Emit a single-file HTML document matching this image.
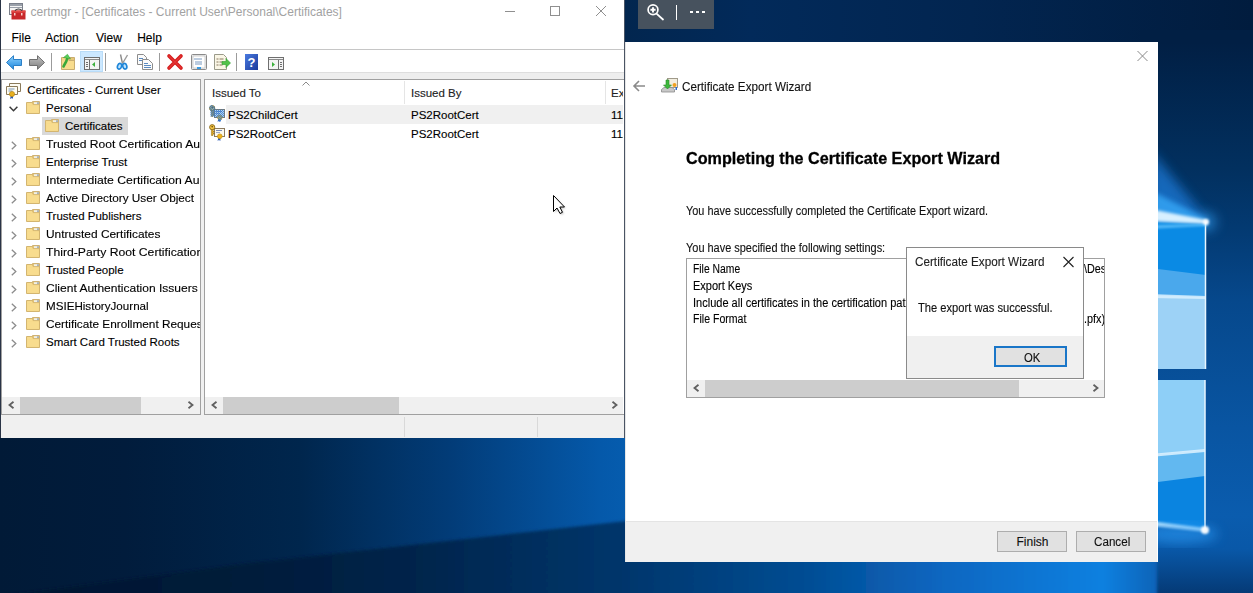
<!DOCTYPE html>
<html><head><meta charset="utf-8">
<style>
*{margin:0;padding:0;box-sizing:border-box}
html,body{width:1253px;height:593px;overflow:hidden}
body{position:relative;font-family:"Liberation Sans",sans-serif;font-size:12px;color:#000;background:#02204a}
.a{position:absolute}
.t{position:absolute;white-space:nowrap;line-height:12px;font-size:12px;-webkit-text-stroke:0.12px currentColor}
.s{font-size:11.5px;line-height:12px}
svg{position:absolute;overflow:visible}
.tr{position:absolute;left:0;height:18px;width:200px}
.btn{position:absolute;background:#e1e1e1;border:1px solid #adadad}
</style></head><body>
<svg class="a" style="left:0;top:0" width="1253" height="593" viewBox="0 0 1253 593">
<defs>
 <linearGradient id="gTop" gradientUnits="userSpaceOnUse" x1="625" y1="0" x2="1253" y2="0">
  <stop offset="0" stop-color="#02264f"/>
  <stop offset="0.2" stop-color="#022a5a"/>
  <stop offset="0.55" stop-color="#022550"/>
  <stop offset="1" stop-color="#011c3e"/>
 </linearGradient>
 <linearGradient id="gRight" gradientUnits="userSpaceOnUse" x1="0" y1="42" x2="0" y2="593">
  <stop offset="0" stop-color="#011f44"/>
  <stop offset="0.23" stop-color="#02305f"/>
  <stop offset="0.34" stop-color="#033a72"/>
  <stop offset="0.47" stop-color="#06488c"/>
  <stop offset="0.7" stop-color="#0955a2"/>
  <stop offset="0.86" stop-color="#0a5cae"/>
  <stop offset="0.92" stop-color="#0958a8"/>
  <stop offset="1" stop-color="#053a76"/>
 </linearGradient>
 <linearGradient id="gAbove" gradientUnits="userSpaceOnUse" x1="0" y1="0" x2="626" y2="0">
  <stop offset="0" stop-color="#011a37"/>
  <stop offset="0.2" stop-color="#011c3c"/>
  <stop offset="0.48" stop-color="#00264d"/>
  <stop offset="0.72" stop-color="#023c78"/>
  <stop offset="0.96" stop-color="#0559aa"/>
  <stop offset="1" stop-color="#065cae"/>
 </linearGradient>
 <linearGradient id="gBelow" gradientUnits="userSpaceOnUse" x1="0" y1="0" x2="1253" y2="0">
  <stop offset="0" stop-color="#011630"/>
  <stop offset="0.2" stop-color="#011b3a"/>
  <stop offset="0.32" stop-color="#012349"/>
  <stop offset="0.5" stop-color="#03366c"/>
  <stop offset="0.64" stop-color="#034c92"/>
  <stop offset="0.75" stop-color="#0a66c0"/>
  <stop offset="0.88" stop-color="#0a80e0"/>
  <stop offset="0.94" stop-color="#0858a8"/>
  <stop offset="1" stop-color="#043a76"/>
 </linearGradient>
 <filter id="b6" x="-20%" y="-20%" width="140%" height="140%"><feGaussianBlur stdDeviation="6"/></filter>
 <filter id="b3" x="-20%" y="-50%" width="140%" height="200%"><feGaussianBlur stdDeviation="2.5"/></filter>
 <filter id="b15" x="-50%" y="-50%" width="200%" height="200%"><feGaussianBlur stdDeviation="15"/></filter>
 <filter id="b6w" x="-150%" y="-150%" width="400%" height="400%"><feGaussianBlur stdDeviation="6"/></filter>
 <filter id="b1" x="-50%" y="-50%" width="200%" height="200%"><feGaussianBlur stdDeviation="1"/></filter>
 <filter id="b2" x="-50%" y="-50%" width="200%" height="200%"><feGaussianBlur stdDeviation="1.6"/></filter>
</defs>
<rect width="1253" height="593" fill="#011f40"/>
<rect x="600" y="0" width="653" height="60" fill="url(#gTop)"/>
<rect x="1140" y="30" width="113" height="563" fill="url(#gRight)"/>
<rect x="0" y="420" width="640" height="173" fill="url(#gAbove)"/>
<polygon points="-20,620 -20,599 250,563 626,521 1157,440 1157,620" fill="url(#gBelow)" filter="url(#b2)"/>
<rect x="0" y="520" width="640" height="73" fill="#053f7e" opacity="0.0"/>
<!-- faint beam light just above diagonal -->
<!-- logo glow above -->
<polygon points="1150,150 1207,219 1207,226 1150,228" fill="#1a7ad8" opacity="0.75" filter="url(#b6)"/>
<polygon points="1150,190 1207,219 1207,225 1150,224" fill="#3ab0ff" opacity="0.7" filter="url(#b3)"/>
<circle cx="1207" cy="222" r="10" fill="#3aa0f0" opacity="0.5" filter="url(#b6w)"/>
<!-- logo upper pane -->
<polygon points="1150,222 1206,224 1206,369 1150,369" fill="#0a8ae4"/>
<polygon points="1150,268 1206,275 1206,369 1150,369" fill="#4aa8ec"/>
<polygon points="1150,295 1206,297 1206,369 1150,369" fill="#9dd2f6"/>
<polygon points="1150,294 1206,296 1206,299 1150,298" fill="#dff2ff" opacity="0.8"/>
<line x1="1205.5" y1="222" x2="1205.5" y2="369" stroke="#e8f6ff" stroke-width="1.5"/>
<polygon points="1150,209 1207,220 1207,224 1150,221" fill="#d8f0ff" filter="url(#b2)"/>
<polygon points="1150,225 1207,224 1207,226 1150,229" fill="#6ac8ff" opacity="0.7" filter="url(#b1)"/>
<circle cx="1206" cy="222" r="3" fill="#ffffff" opacity="0.9" filter="url(#b1)"/>
<!-- lower pane -->
<polygon points="1150,380 1205,380 1205,530 1150,523" fill="#8ecff7"/>
<polygon points="1150,455 1205,450 1205,530 1150,523" fill="#62b8f0"/>
<polygon points="1150,483 1205,476 1205,530 1150,523" fill="#0a84e0"/>
<polygon points="1150,454 1205,449 1205,452 1150,457" fill="#dff2ff" opacity="0.85"/>
<line x1="1205" y1="380" x2="1205" y2="530" stroke="#e8f6ff" stroke-width="1.5"/>
<polygon points="1150,521 1205,528 1205,532 1150,526" fill="#cfeeff" opacity="0.9" filter="url(#b1)"/>
<ellipse cx="1180" cy="534" rx="38" ry="10" fill="#2a9af5" opacity="0.6" filter="url(#b6)"/>
<circle cx="1205" cy="530" r="4" fill="#ffffff" opacity="0.95" filter="url(#b1)"/>
</svg>
<!-- ============ certmgr window ============ -->
<div class="a" style="left:0;top:0;width:625px;height:438px;background:#fff;border-left:1px solid #2a3446;border-right:1px solid #4a5464"></div>
<!-- title icon -->
<svg style="left:9px;top:3px" width="17" height="17" viewBox="0 0 17 17">
 <rect x="0.5" y="0.5" width="13" height="11" fill="#f4f4f4" stroke="#7a7f8a"/>
 <rect x="1" y="1" width="12" height="2" fill="#9aa0aa"/>
 <line x1="1" y1="4.5" x2="13" y2="4.5" stroke="#9aa0aa"/>
 <path d="M2.5 7.5 h14 v9 h-14z" fill="#c8282a"/>
 <path d="M2.5 7.5 h14 v2 h-14z" fill="#e24a46"/>
 <path d="M6 7.5 q3.5 -3 7 0" fill="none" stroke="#333" stroke-width="1.2"/>
 <rect x="5" y="10" width="1.5" height="2.5" fill="#f6d0cc"/>
 <rect x="12" y="10" width="1.5" height="2.5" fill="#f6d0cc"/>
</svg>
<div class="t" style="left:30.5px;top:6px;color:#a2a2a2;-webkit-text-stroke:0">certmgr - [Certificates - Current User\Personal\Certificates]</div>
<!-- caption buttons -->
<div class="a" style="left:505px;top:11px;width:10px;height:1px;background:#8f8f8f"></div>
<div class="a" style="left:550px;top:6px;width:10px;height:10px;border:1px solid #8f8f8f"></div>
<svg style="left:596px;top:6px" width="10" height="10" viewBox="0 0 10 10"><path d="M0 0L10 10M10 0L0 10" stroke="#8f8f8f" stroke-width="1"/></svg>
<!-- menu -->
<div class="t" style="left:11.5px;top:32px">File</div>
<div class="t" style="left:45.3px;top:32px">Action</div>
<div class="t" style="left:96px;top:32px">View</div>
<div class="t" style="left:137.2px;top:32px">Help</div>
<div class="a" style="left:1px;top:49px;width:623px;height:1px;background:#c6c6c6"></div>

<!-- toolbar -->
<svg style="left:6px;top:55px" width="16" height="15" viewBox="0 0 16 15">
 <defs><linearGradient id="gBk" x1="0" y1="0" x2="0" y2="1"><stop offset="0" stop-color="#8fd2ff"/><stop offset="1" stop-color="#1a86dc"/></linearGradient></defs>
 <path d="M0.5 7.5 L7.5 0.7 V4.5 H15.5 V10.5 H7.5 V14.3Z" fill="url(#gBk)" stroke="#2b7fc6" stroke-width="1"/>
</svg>
<svg style="left:29px;top:55px" width="16" height="15" viewBox="0 0 16 15">
 <defs><linearGradient id="gFw" x1="0" y1="0" x2="0" y2="1"><stop offset="0" stop-color="#c4c4c4"/><stop offset="1" stop-color="#7e7e7e"/></linearGradient></defs>
 <path d="M15.5 7.5 L8.5 0.7 V4.5 H0.5 V10.5 H8.5 V14.3Z" fill="url(#gFw)" stroke="#6f6f6f" stroke-width="1"/>
</svg>
<div class="a" style="left:51px;top:53px;width:1px;height:18px;background:#9b9b9b"></div>
<svg style="left:61px;top:54px" width="15" height="17" viewBox="0 0 15 17">
 <path d="M7.5 3.5 H13.5 V9 H7.5Z" fill="#e6c676" stroke="#c9ad70"/>
 <path d="M0.5 3.5 H7 L8 6.5 H13.5 V15.5 H0.5Z" fill="#f5d788" stroke="#c9ad70"/>
 <rect x="1.2" y="7" width="11.6" height="8" fill="#f8dc8e"/>
 <path d="M2.5 12.5 C3.5 10 5.5 8 6 5" fill="none" stroke="#3aa83a" stroke-width="2.6" stroke-linecap="round"/>
 <path d="M2.5 3.5 L6.5 0.3 L9.5 5 Z" fill="#5ad05a" stroke="#2e9a2e" stroke-width="0.5"/>
</svg>
<div class="a" style="left:80px;top:51px;width:23px;height:21px;background:#cce8ff;border:1px solid #b9dcf8"></div>
<svg style="left:84px;top:57px" width="16" height="13" viewBox="0 0 16 13">
 <rect x="0.5" y="0.5" width="15" height="12" fill="#f4f4f4" stroke="#6f6f6f"/>
 <line x1="1" y1="2.5" x2="15" y2="2.5" stroke="#8a8a8a"/>
 <line x1="5.5" y1="3" x2="5.5" y2="12" stroke="#6f6f6f"/>
 <rect x="2" y="5" width="2" height="1" fill="#6f6f6f"/><rect x="2" y="7" width="2" height="1" fill="#6f6f6f"/><rect x="2" y="9" width="2" height="1" fill="#6f6f6f"/>
 <path d="M11 5 L8 7.5 L11 10Z" fill="#3cb03c"/>
</svg>
<div class="a" style="left:105px;top:53px;width:1px;height:18px;background:#9b9b9b"></div>
<svg style="left:116px;top:54px" width="13" height="16" viewBox="0 0 13 16">
 <path d="M4.5 0.5 L6.5 9.5" stroke="#8a8a8a" stroke-width="1.4"/>
 <path d="M11.5 1 L6.5 9.5" stroke="#9a9a9a" stroke-width="1.4"/>
 <ellipse cx="3.5" cy="12.3" rx="2" ry="2.9" transform="rotate(20 3.5 12.3)" fill="#bfe4ff" stroke="#1f86d8" stroke-width="1.6"/>
 <ellipse cx="8.8" cy="12.3" rx="2" ry="2.9" transform="rotate(-15 8.8 12.3)" fill="#bfe4ff" stroke="#1f86d8" stroke-width="1.6"/>
</svg>
<svg style="left:137px;top:54px" width="17" height="16" viewBox="0 0 17 16">
 <path d="M0.5 0.5 H6.5 L9.5 3.5 V10.5 H0.5Z" fill="#fbfbfb" stroke="#8c8c8c"/>
 <rect x="2" y="4" width="4" height="1" fill="#5a8ac0"/><rect x="2" y="6" width="5" height="1" fill="#5a8ac0"/>
 <path d="M5.5 5.5 H11.5 L15.5 9.5 V15.5 H5.5Z" fill="#fbfbfb" stroke="#8c8c8c"/>
 <rect x="7" y="9" width="4" height="1" fill="#5a8ac0"/><rect x="7" y="11" width="7" height="1" fill="#5a8ac0"/><rect x="7" y="13" width="7" height="1" fill="#5a8ac0"/>
</svg>
<div class="a" style="left:159px;top:53px;width:1px;height:18px;background:#9b9b9b"></div>
<svg style="left:167px;top:54px" width="16" height="16" viewBox="0 0 16 16">
 <path d="M2 2 L14 14 M14 2 L2 14" stroke="#d41a1a" stroke-width="3.6" stroke-linecap="round"/>
 <path d="M2 2 L14 14 M14 2 L2 14" stroke="#f04848" stroke-width="1.4" stroke-linecap="round" opacity="0.6"/>
</svg>
<svg style="left:191px;top:54px" width="16" height="16" viewBox="0 0 16 16">
 <rect x="0.5" y="0.5" width="15" height="15" rx="1" fill="#f0f0f0" stroke="#8a8a8a"/>
 <rect x="2" y="2" width="12" height="12" fill="#fff" stroke="#b0b0b0" stroke-width="0.6"/>
 <path d="M3 5h8M4 8h7M4 10h7" stroke="#6a8cb8" stroke-width="0.9"/>
 <rect x="6" y="13" width="4" height="2" fill="#3a9ae0"/>
</svg>
<svg style="left:214px;top:54px" width="17" height="16" viewBox="0 0 17 16">
 <path d="M0.5 0.5 h9 l3 3 v12 h-12z" fill="#faf6e6" stroke="#9a9a8a"/>
 <path d="M2.5 5h2M2.5 8h2M2.5 11h2M5.5 5h4M5.5 8h3M5.5 11h3" stroke="#7a6a50" stroke-width="0.9"/>
 <path d="M8 7.5 h4 v-3 l4.5 4.5 l-4.5 4.5 v-3 h-4z" fill="#52c24a" stroke="#2e9a2e" stroke-width="0.6"/>
</svg>
<div class="a" style="left:236px;top:53px;width:1px;height:18px;background:#9b9b9b"></div>
<svg style="left:245px;top:54px" width="14" height="16" viewBox="0 0 14 16">
 <defs><linearGradient id="gHp" x1="0" y1="0" x2="1" y2="1"><stop offset="0" stop-color="#4a7ae0"/><stop offset="1" stop-color="#1a3a9a"/></linearGradient></defs>
 <rect x="0" y="0" width="13" height="16" fill="url(#gHp)"/>
 <text x="6.5" y="13" font-family="Liberation Sans" font-size="13" font-weight="bold" fill="#fff" text-anchor="middle">?</text>
</svg>
<svg style="left:268px;top:57px" width="16" height="13" viewBox="0 0 16 13">
 <rect x="0.5" y="0.5" width="15" height="12" fill="#f4f4f4" stroke="#6f6f6f"/>
 <line x1="1" y1="2.5" x2="15" y2="2.5" stroke="#8a8a8a"/>
 <line x1="10.5" y1="3" x2="10.5" y2="12" stroke="#6f6f6f"/>
 <rect x="12" y="5" width="2" height="1" fill="#6f6f6f"/><rect x="12" y="7" width="2" height="1" fill="#6f6f6f"/><rect x="12" y="9" width="2" height="1" fill="#6f6f6f"/>
 <path d="M4 5 L7 7.5 L4 10Z" fill="#3cb03c"/>
</svg>

<!-- band under toolbar -->
<div class="a" style="left:1px;top:72px;width:623px;height:8px;background:#eeeeee;border-top:1px solid #dedede"></div>

<!-- left tree panel -->
<div class="a" style="left:1px;top:79px;width:200px;height:336px;background:#fff;border:1px solid #a0a0a0"></div>
<div class="a" style="left:201px;top:79px;width:3px;height:336px;background:#f0f0f0"></div>
<!-- right list panel -->
<div class="a" style="left:204px;top:79px;width:420px;height:336px;background:#fff;border-left:1px solid #a0a0a0;border-bottom:1px solid #a0a0a0;border-top:1px solid #a0a0a0"></div>
<!-- status bar -->
<div class="a" style="left:1px;top:415px;width:623px;height:23px;background:#f0f0f0"></div>
<div class="a" style="left:404px;top:417px;width:1px;height:20px;background:#d9d9d9"></div>
<div class="a" style="left:537px;top:417px;width:1px;height:20px;background:#d9d9d9"></div>
<!-- tree -->
<div class="a" style="left:2px;top:80px;width:198px;height:317px;overflow:hidden">
<svg style="left:4px;top:3px" width="16" height="16" viewBox="0 0 16 16"><path d="M3.5 0.5h11v8h-11z" fill="#fdfbf2" stroke="#8a7a5a"/><path d="M0.5 3.5h11v8h-11z" fill="#fdfbf2" stroke="#8a7a5a"/><path d="M2.5 6h6M2.5 8h4" stroke="#6a8ab0" stroke-width="0.9"/><path d="M5 12 l-1 4 l2 -1 l1 1 l0 -4z" fill="#2a5ab0"/><circle cx="6" cy="11" r="2.6" fill="#e8b020" stroke="#b08010" stroke-width="0.6"/></svg>
<div class="t s" style="left:25.2px;top:3.5px">Certificates - Current User</div>
<svg style="left:7px;top:26px" width="9" height="6" viewBox="0 0 9 6"><path d="M0.6 0.8 L4.5 4.8 L8.4 0.8" fill="none" stroke="#3a3a3a" stroke-width="1.5"/></svg>
<svg style="left:24px;top:21px" width="14" height="13" viewBox="0 0 14 13"><path d="M6.5 0.5 H13.5 V6 H6.5Z" fill="#e6c676" stroke="#d0b274"/><rect x="8" y="1.2" width="4.8" height="2.3" fill="#efefe8"/><rect x="11.2" y="1.2" width="1.6" height="2.3" fill="#9aa6b0"/><path d="M0.5 1.5 H6.3 L7.3 3.7 H13.5 V12.5 H0.5Z" fill="#f5d788" stroke="#d3b570"/><rect x="1.2" y="4.3" width="11.6" height="7.5" fill="#f8dc8e"/><rect x="1.2" y="2.2" width="5" height="2" fill="#f8dc8e"/></svg>
<div class="t s" style="left:44.0px;top:21.5px">Personal</div>
<div class="a" style="left:40px;top:37px;width:86px;height:18px;background:#d9d9d9"></div>
<svg style="left:43px;top:39px" width="14" height="13" viewBox="0 0 14 13"><path d="M6.5 0.5 H13.5 V6 H6.5Z" fill="#e6c676" stroke="#d0b274"/><rect x="8" y="1.2" width="4.8" height="2.3" fill="#efefe8"/><rect x="11.2" y="1.2" width="1.6" height="2.3" fill="#9aa6b0"/><path d="M0.5 1.5 H6.3 L7.3 3.7 H13.5 V12.5 H0.5Z" fill="#f5d788" stroke="#d3b570"/><rect x="1.2" y="4.3" width="11.6" height="7.5" fill="#f8dc8e"/><rect x="1.2" y="2.2" width="5" height="2" fill="#f8dc8e"/></svg>
<div class="t s" style="left:63.0px;top:39.5px">Certificates</div>
<svg style="left:8.7px;top:61px" width="6" height="9" viewBox="0 0 6 9"><path d="M0.8 0.8 L4.8 4.5 L0.8 8.2" fill="none" stroke="#8c8c8c" stroke-width="1.3"/></svg>
<svg style="left:24px;top:57px" width="14" height="13" viewBox="0 0 14 13"><path d="M6.5 0.5 H13.5 V6 H6.5Z" fill="#e6c676" stroke="#d0b274"/><rect x="8" y="1.2" width="4.8" height="2.3" fill="#efefe8"/><rect x="11.2" y="1.2" width="1.6" height="2.3" fill="#9aa6b0"/><path d="M0.5 1.5 H6.3 L7.3 3.7 H13.5 V12.5 H0.5Z" fill="#f5d788" stroke="#d3b570"/><rect x="1.2" y="4.3" width="11.6" height="7.5" fill="#f8dc8e"/><rect x="1.2" y="2.2" width="5" height="2" fill="#f8dc8e"/></svg>
<div class="t s" style="left:44.0px;top:57.5px;transform:scaleX(1.05);transform-origin:0 0">Trusted Root Certification Au</div>
<svg style="left:8.7px;top:79px" width="6" height="9" viewBox="0 0 6 9"><path d="M0.8 0.8 L4.8 4.5 L0.8 8.2" fill="none" stroke="#8c8c8c" stroke-width="1.3"/></svg>
<svg style="left:24px;top:75px" width="14" height="13" viewBox="0 0 14 13"><path d="M6.5 0.5 H13.5 V6 H6.5Z" fill="#e6c676" stroke="#d0b274"/><rect x="8" y="1.2" width="4.8" height="2.3" fill="#efefe8"/><rect x="11.2" y="1.2" width="1.6" height="2.3" fill="#9aa6b0"/><path d="M0.5 1.5 H6.3 L7.3 3.7 H13.5 V12.5 H0.5Z" fill="#f5d788" stroke="#d3b570"/><rect x="1.2" y="4.3" width="11.6" height="7.5" fill="#f8dc8e"/><rect x="1.2" y="2.2" width="5" height="2" fill="#f8dc8e"/></svg>
<div class="t s" style="left:44.0px;top:75.5px">Enterprise Trust</div>
<svg style="left:8.7px;top:97px" width="6" height="9" viewBox="0 0 6 9"><path d="M0.8 0.8 L4.8 4.5 L0.8 8.2" fill="none" stroke="#8c8c8c" stroke-width="1.3"/></svg>
<svg style="left:24px;top:93px" width="14" height="13" viewBox="0 0 14 13"><path d="M6.5 0.5 H13.5 V6 H6.5Z" fill="#e6c676" stroke="#d0b274"/><rect x="8" y="1.2" width="4.8" height="2.3" fill="#efefe8"/><rect x="11.2" y="1.2" width="1.6" height="2.3" fill="#9aa6b0"/><path d="M0.5 1.5 H6.3 L7.3 3.7 H13.5 V12.5 H0.5Z" fill="#f5d788" stroke="#d3b570"/><rect x="1.2" y="4.3" width="11.6" height="7.5" fill="#f8dc8e"/><rect x="1.2" y="2.2" width="5" height="2" fill="#f8dc8e"/></svg>
<div class="t s" style="left:44.0px;top:93.5px;transform:scaleX(1.062);transform-origin:0 0">Intermediate Certification Au</div>
<svg style="left:8.7px;top:115px" width="6" height="9" viewBox="0 0 6 9"><path d="M0.8 0.8 L4.8 4.5 L0.8 8.2" fill="none" stroke="#8c8c8c" stroke-width="1.3"/></svg>
<svg style="left:24px;top:111px" width="14" height="13" viewBox="0 0 14 13"><path d="M6.5 0.5 H13.5 V6 H6.5Z" fill="#e6c676" stroke="#d0b274"/><rect x="8" y="1.2" width="4.8" height="2.3" fill="#efefe8"/><rect x="11.2" y="1.2" width="1.6" height="2.3" fill="#9aa6b0"/><path d="M0.5 1.5 H6.3 L7.3 3.7 H13.5 V12.5 H0.5Z" fill="#f5d788" stroke="#d3b570"/><rect x="1.2" y="4.3" width="11.6" height="7.5" fill="#f8dc8e"/><rect x="1.2" y="2.2" width="5" height="2" fill="#f8dc8e"/></svg>
<div class="t s" style="left:44.0px;top:111.5px;transform:scaleX(1.025);transform-origin:0 0">Active Directory User Object</div>
<svg style="left:8.7px;top:133px" width="6" height="9" viewBox="0 0 6 9"><path d="M0.8 0.8 L4.8 4.5 L0.8 8.2" fill="none" stroke="#8c8c8c" stroke-width="1.3"/></svg>
<svg style="left:24px;top:129px" width="14" height="13" viewBox="0 0 14 13"><path d="M6.5 0.5 H13.5 V6 H6.5Z" fill="#e6c676" stroke="#d0b274"/><rect x="8" y="1.2" width="4.8" height="2.3" fill="#efefe8"/><rect x="11.2" y="1.2" width="1.6" height="2.3" fill="#9aa6b0"/><path d="M0.5 1.5 H6.3 L7.3 3.7 H13.5 V12.5 H0.5Z" fill="#f5d788" stroke="#d3b570"/><rect x="1.2" y="4.3" width="11.6" height="7.5" fill="#f8dc8e"/><rect x="1.2" y="2.2" width="5" height="2" fill="#f8dc8e"/></svg>
<div class="t s" style="left:44.0px;top:129.5px">Trusted Publishers</div>
<svg style="left:8.7px;top:151px" width="6" height="9" viewBox="0 0 6 9"><path d="M0.8 0.8 L4.8 4.5 L0.8 8.2" fill="none" stroke="#8c8c8c" stroke-width="1.3"/></svg>
<svg style="left:24px;top:147px" width="14" height="13" viewBox="0 0 14 13"><path d="M6.5 0.5 H13.5 V6 H6.5Z" fill="#e6c676" stroke="#d0b274"/><rect x="8" y="1.2" width="4.8" height="2.3" fill="#efefe8"/><rect x="11.2" y="1.2" width="1.6" height="2.3" fill="#9aa6b0"/><path d="M0.5 1.5 H6.3 L7.3 3.7 H13.5 V12.5 H0.5Z" fill="#f5d788" stroke="#d3b570"/><rect x="1.2" y="4.3" width="11.6" height="7.5" fill="#f8dc8e"/><rect x="1.2" y="2.2" width="5" height="2" fill="#f8dc8e"/></svg>
<div class="t s" style="left:44.0px;top:147.5px;transform:scaleX(1.035);transform-origin:0 0">Untrusted Certificates</div>
<svg style="left:8.7px;top:169px" width="6" height="9" viewBox="0 0 6 9"><path d="M0.8 0.8 L4.8 4.5 L0.8 8.2" fill="none" stroke="#8c8c8c" stroke-width="1.3"/></svg>
<svg style="left:24px;top:165px" width="14" height="13" viewBox="0 0 14 13"><path d="M6.5 0.5 H13.5 V6 H6.5Z" fill="#e6c676" stroke="#d0b274"/><rect x="8" y="1.2" width="4.8" height="2.3" fill="#efefe8"/><rect x="11.2" y="1.2" width="1.6" height="2.3" fill="#9aa6b0"/><path d="M0.5 1.5 H6.3 L7.3 3.7 H13.5 V12.5 H0.5Z" fill="#f5d788" stroke="#d3b570"/><rect x="1.2" y="4.3" width="11.6" height="7.5" fill="#f8dc8e"/><rect x="1.2" y="2.2" width="5" height="2" fill="#f8dc8e"/></svg>
<div class="t s" style="left:44.0px;top:165.5px;transform:scaleX(1.06);transform-origin:0 0">Third-Party Root Certification</div>
<svg style="left:8.7px;top:187px" width="6" height="9" viewBox="0 0 6 9"><path d="M0.8 0.8 L4.8 4.5 L0.8 8.2" fill="none" stroke="#8c8c8c" stroke-width="1.3"/></svg>
<svg style="left:24px;top:183px" width="14" height="13" viewBox="0 0 14 13"><path d="M6.5 0.5 H13.5 V6 H6.5Z" fill="#e6c676" stroke="#d0b274"/><rect x="8" y="1.2" width="4.8" height="2.3" fill="#efefe8"/><rect x="11.2" y="1.2" width="1.6" height="2.3" fill="#9aa6b0"/><path d="M0.5 1.5 H6.3 L7.3 3.7 H13.5 V12.5 H0.5Z" fill="#f5d788" stroke="#d3b570"/><rect x="1.2" y="4.3" width="11.6" height="7.5" fill="#f8dc8e"/><rect x="1.2" y="2.2" width="5" height="2" fill="#f8dc8e"/></svg>
<div class="t s" style="left:44.0px;top:183.5px">Trusted People</div>
<svg style="left:8.7px;top:205px" width="6" height="9" viewBox="0 0 6 9"><path d="M0.8 0.8 L4.8 4.5 L0.8 8.2" fill="none" stroke="#8c8c8c" stroke-width="1.3"/></svg>
<svg style="left:24px;top:201px" width="14" height="13" viewBox="0 0 14 13"><path d="M6.5 0.5 H13.5 V6 H6.5Z" fill="#e6c676" stroke="#d0b274"/><rect x="8" y="1.2" width="4.8" height="2.3" fill="#efefe8"/><rect x="11.2" y="1.2" width="1.6" height="2.3" fill="#9aa6b0"/><path d="M0.5 1.5 H6.3 L7.3 3.7 H13.5 V12.5 H0.5Z" fill="#f5d788" stroke="#d3b570"/><rect x="1.2" y="4.3" width="11.6" height="7.5" fill="#f8dc8e"/><rect x="1.2" y="2.2" width="5" height="2" fill="#f8dc8e"/></svg>
<div class="t s" style="left:44.0px;top:201.5px;transform:scaleX(1.045);transform-origin:0 0">Client Authentication Issuers</div>
<svg style="left:8.7px;top:223px" width="6" height="9" viewBox="0 0 6 9"><path d="M0.8 0.8 L4.8 4.5 L0.8 8.2" fill="none" stroke="#8c8c8c" stroke-width="1.3"/></svg>
<svg style="left:24px;top:219px" width="14" height="13" viewBox="0 0 14 13"><path d="M6.5 0.5 H13.5 V6 H6.5Z" fill="#e6c676" stroke="#d0b274"/><rect x="8" y="1.2" width="4.8" height="2.3" fill="#efefe8"/><rect x="11.2" y="1.2" width="1.6" height="2.3" fill="#9aa6b0"/><path d="M0.5 1.5 H6.3 L7.3 3.7 H13.5 V12.5 H0.5Z" fill="#f5d788" stroke="#d3b570"/><rect x="1.2" y="4.3" width="11.6" height="7.5" fill="#f8dc8e"/><rect x="1.2" y="2.2" width="5" height="2" fill="#f8dc8e"/></svg>
<div class="t s" style="left:44.0px;top:219.5px;transform:scaleX(1.01);transform-origin:0 0">MSIEHistoryJournal</div>
<svg style="left:8.7px;top:241px" width="6" height="9" viewBox="0 0 6 9"><path d="M0.8 0.8 L4.8 4.5 L0.8 8.2" fill="none" stroke="#8c8c8c" stroke-width="1.3"/></svg>
<svg style="left:24px;top:237px" width="14" height="13" viewBox="0 0 14 13"><path d="M6.5 0.5 H13.5 V6 H6.5Z" fill="#e6c676" stroke="#d0b274"/><rect x="8" y="1.2" width="4.8" height="2.3" fill="#efefe8"/><rect x="11.2" y="1.2" width="1.6" height="2.3" fill="#9aa6b0"/><path d="M0.5 1.5 H6.3 L7.3 3.7 H13.5 V12.5 H0.5Z" fill="#f5d788" stroke="#d3b570"/><rect x="1.2" y="4.3" width="11.6" height="7.5" fill="#f8dc8e"/><rect x="1.2" y="2.2" width="5" height="2" fill="#f8dc8e"/></svg>
<div class="t s" style="left:44.0px;top:237.5px;transform:scaleX(1.025);transform-origin:0 0">Certificate Enrollment Requests</div>
<svg style="left:8.7px;top:259px" width="6" height="9" viewBox="0 0 6 9"><path d="M0.8 0.8 L4.8 4.5 L0.8 8.2" fill="none" stroke="#8c8c8c" stroke-width="1.3"/></svg>
<svg style="left:24px;top:255px" width="14" height="13" viewBox="0 0 14 13"><path d="M6.5 0.5 H13.5 V6 H6.5Z" fill="#e6c676" stroke="#d0b274"/><rect x="8" y="1.2" width="4.8" height="2.3" fill="#efefe8"/><rect x="11.2" y="1.2" width="1.6" height="2.3" fill="#9aa6b0"/><path d="M0.5 1.5 H6.3 L7.3 3.7 H13.5 V12.5 H0.5Z" fill="#f5d788" stroke="#d3b570"/><rect x="1.2" y="4.3" width="11.6" height="7.5" fill="#f8dc8e"/><rect x="1.2" y="2.2" width="5" height="2" fill="#f8dc8e"/></svg>
<div class="t s" style="left:44.0px;top:255.5px">Smart Card Trusted Roots</div>
</div>
<!-- tree h-scrollbar -->
<div class="a" style="left:2px;top:397px;width:198px;height:17px;background:#f0f0f0"></div>
<div class="a" style="left:20px;top:397px;width:121px;height:17px;background:#cdcdcd"></div>
<svg style="left:8px;top:401px" width="7" height="8" viewBox="0 0 7 8"><path d="M5.5 0.8 L1.5 4 L5.5 7.2" fill="none" stroke="#606060" stroke-width="1.8"/></svg>
<svg style="left:187px;top:401px" width="7" height="8" viewBox="0 0 7 8"><path d="M1.5 0.8 L5.5 4 L1.5 7.2" fill="none" stroke="#606060" stroke-width="1.8"/></svg>

<!-- list header -->
<svg style="left:302px;top:81px" width="8" height="5" viewBox="0 0 8 5"><path d="M0.5 4.5 L4 1 L7.5 4.5" fill="none" stroke="#8a8a8a" stroke-width="1"/></svg>
<div class="t s" style="left:212px;top:87px;color:#222">Issued To</div>
<div class="a" style="left:404px;top:81px;width:1px;height:23px;background:#e5e5e5"></div>
<div class="t s" style="left:411px;top:87px;color:#222">Issued By</div>
<div class="a" style="left:605px;top:81px;width:1px;height:23px;background:#e5e5e5"></div>
<!-- row 1 selected -->
<div class="a" style="left:226px;top:105px;width:397px;height:19px;background:#f0f0f0"></div>
<svg style="left:209px;top:105px" width="17" height="17" viewBox="0 0 17 17">
 <defs><pattern id="chk" width="2" height="2" patternUnits="userSpaceOnUse"><rect width="1" height="1" fill="#1a6ad0"/><rect x="1" y="1" width="1" height="1" fill="#1a6ad0"/></pattern></defs>
 <rect x="5.5" y="4.5" width="10" height="8" fill="#fbf8ee" stroke="#8a7a60"/>
 <rect x="7" y="6" width="6" height="1" fill="#7a8ab8"/><rect x="7" y="8" width="4" height="1" fill="#9aa8c8"/>
 <path d="M9.5 13.5 l-1 3.3 l1.6 -0.8 l1.2 0.9 l0.2 -3.4z" fill="#2a5ab8"/>
 <circle cx="10.8" cy="12.3" r="2.4" fill="#f0b418" stroke="#c08a10" stroke-width="0.6"/>
 <circle cx="3.2" cy="3.2" r="2.6" fill="#f4c648" stroke="#7a5a10" stroke-width="0.8"/>
 <circle cx="3.2" cy="2.6" r="0.9" fill="#7a5a10"/>
 <path d="M2.4 5.5 V11.5 H4 V10 H5 V9 H4 V8 H5 V7 H4 V5.5Z" fill="#e2a828" stroke="#8a6a10" stroke-width="0.5"/>

 <path d="M0.5 1 L3 0 L6 2 V4.5 H15.5 V12.5 H12.8 V14 L11 17 L9 15 V12.5 H5 V11.5 H1.5 V5.5 L0.5 4Z" fill="url(#chk)" opacity="0.75"/>
 <path d="M0.5 1 L3 0 L6 2 V4.5 H15.5 V12.5 H12.8 V14 L11 17 L9 15 V12.5 H5 V11.5 H1.5 V5.5 L0.5 4Z" fill="#3a8ae0" opacity="0.35"/>
</svg>
<div class="t s" style="left:228px;top:108.5px">PS2ChildCert</div>
<div class="t s" style="left:411px;top:108.5px">PS2RootCert</div>
<!-- row 2 -->
<svg style="left:209px;top:124px" width="17" height="17" viewBox="0 0 17 17">
 <rect x="5.5" y="4.5" width="10" height="8" fill="#fbf8ee" stroke="#8a7a60"/>
 <rect x="7" y="6" width="6" height="1" fill="#7a8ab8"/><rect x="7" y="8" width="4" height="1" fill="#9aa8c8"/>
 <path d="M9.5 13.5 l-1 3.3 l1.6 -0.8 l1.2 0.9 l0.2 -3.4z" fill="#2a5ab8"/>
 <circle cx="10.8" cy="12.3" r="2.4" fill="#f0b418" stroke="#c08a10" stroke-width="0.6"/>
 <circle cx="3.2" cy="3.2" r="2.6" fill="#f4c648" stroke="#7a5a10" stroke-width="0.8"/>
 <circle cx="3.2" cy="2.6" r="0.9" fill="#7a5a10"/>
 <path d="M2.4 5.5 V11.5 H4 V10 H5 V9 H4 V8 H5 V7 H4 V5.5Z" fill="#e2a828" stroke="#8a6a10" stroke-width="0.5"/>
</svg>
<div class="t s" style="left:228px;top:127.5px">PS2RootCert</div>
<div class="t s" style="left:411px;top:127.5px">PS2RootCert</div>

<div class="a" style="left:611px;top:80px;width:12px;height:60px;overflow:hidden">
 <div class="t s" style="left:0;top:7px;color:#222">Expiration</div>
 <div class="t s" style="left:0;top:28.5px">11/16/2021</div>
 <div class="t s" style="left:0;top:47.5px">11/16/2021</div>
</div>
<!-- list h-scrollbar -->
<div class="a" style="left:205px;top:397px;width:418px;height:17px;background:#f0f0f0"></div>
<div class="a" style="left:223px;top:397px;width:176px;height:17px;background:#cdcdcd"></div>
<svg style="left:211px;top:401px" width="7" height="8" viewBox="0 0 7 8"><path d="M5.5 0.8 L1.5 4 L5.5 7.2" fill="none" stroke="#606060" stroke-width="1.8"/></svg>
<svg style="left:611px;top:401px" width="7" height="8" viewBox="0 0 7 8"><path d="M1.5 0.8 L5.5 4 L1.5 7.2" fill="none" stroke="#606060" stroke-width="1.8"/></svg>

<!-- mouse cursor -->
<svg style="left:552px;top:194px" width="16" height="22" viewBox="0 0 16 22">
 <path d="M1.5 1.5 V17.5 L5 14 L8 19.5 L10.5 18.3 L7.8 13 H12.5 Z" fill="#000" opacity="0.25" transform="translate(1.2 1.2)" filter="url(#b1)"/>
 <path d="M1.5 1.5 V17.5 L5 14 L8 19.5 L10.5 18.3 L7.8 13 H12.5 Z" fill="#fff" stroke="#000" stroke-width="1" stroke-linejoin="miter"/>
</svg>
<!-- ============ wizard ============ -->
<div class="a" style="left:625px;top:42px;width:533px;height:520px;background:#fff;border-left:1px solid #e6e6e6"></div>
<svg style="left:1137px;top:51px" width="11" height="10" viewBox="0 0 11 10"><path d="M0.5 0 L10.5 10 M10.5 0 L0.5 10" stroke="#8a8a8a" stroke-width="1"/></svg>
<svg style="left:633px;top:80px" width="13" height="12" viewBox="0 0 13 12"><path d="M12 6 H1.5 M6 1 L1 6 L6 11" fill="none" stroke="#8a8a8a" stroke-width="1.6"/></svg>
<svg style="left:661px;top:78px" width="17" height="15" viewBox="0 0 17 15">
 <rect x="6.5" y="0.5" width="10" height="9" fill="#f2eee0" stroke="#a09a8a"/>
 <circle cx="13.5" cy="7" r="2" fill="#f0a020"/>
 <rect x="14.5" y="9" width="1.5" height="3" fill="#2a6ad0"/>
 <path d="M0.5 11.5 L3 9.5 H11 L13.5 11.5 V14 H0.5Z" fill="#c8c8c8" stroke="#8a8a8a" stroke-width="0.8"/>
 <path d="M5 2 v5 h-2.5 l4 4 l4 -4 h-2.5 v-5z" fill="#3cb83c" stroke="#2a8a2a" stroke-width="0.6"/>
</svg>
<div class="t" style="left:682.4px;top:81.2px;color:#111;transform:scaleX(0.974);transform-origin:0 0">Certificate Export Wizard</div>
<div class="t" style="left:686px;top:150.5px;font-size:16px;line-height:16px;font-weight:bold;-webkit-text-stroke:0.3px currentColor;transform:scaleX(1.01);transform-origin:0 0">Completing the Certificate Export Wizard</div>
<div class="t" style="left:685.5px;top:204.7px;color:#111;transform:scaleX(0.907);transform-origin:0 0">You have successfully completed the Certificate Export wizard.</div>
<div class="t" style="left:685.5px;top:242.2px;color:#111;transform:scaleX(0.912);transform-origin:0 0">You have specified the following settings:</div>

<!-- settings list box -->
<div class="a" style="left:686px;top:258px;width:419px;height:140px;background:#fff;border:1px solid #a0a0a0"></div>
<div class="a" style="left:687px;top:259px;width:417px;height:121px;overflow:hidden">
 <div class="t" style="left:6px;top:3.6px;transform:scaleX(0.862);transform-origin:0 0">File Name</div>
 <div class="t" style="left:6px;top:20.6px;transform:scaleX(0.917);transform-origin:0 0">Export Keys</div>
 <div class="t" style="left:6px;top:38px;transform:scaleX(0.918);transform-origin:0 0">Include all certificates in the certification path</div>
 <div class="t" style="left:6px;top:54.3px;transform:scaleX(0.88);transform-origin:0 0">File Format</div>
 <div class="t" style="left:397px;top:3.6px;transform:scaleX(0.9);transform-origin:0 0">\Des</div>
 <div class="t" style="left:397px;top:54.3px;transform:scaleX(0.9);transform-origin:0 0">.pfx)</div>
</div>
<div class="a" style="left:687px;top:380px;width:417px;height:17px;background:#f0f0f0"></div>
<div class="a" style="left:705px;top:380px;width:314px;height:17px;background:#cdcdcd"></div>
<svg style="left:693px;top:384px" width="7" height="8" viewBox="0 0 7 8"><path d="M5.5 0.8 L1.5 4 L5.5 7.2" fill="none" stroke="#606060" stroke-width="1.8"/></svg>
<svg style="left:1092px;top:384px" width="7" height="8" viewBox="0 0 7 8"><path d="M1.5 0.8 L5.5 4 L1.5 7.2" fill="none" stroke="#606060" stroke-width="1.8"/></svg>

<!-- footer -->
<div class="a" style="left:626px;top:521px;width:531px;height:41px;background:#f0f0f0;border-top:1px solid #e4e4e4"></div>
<div class="btn" style="left:997px;top:531px;width:70px;height:21px"></div>
<div class="t" style="left:1016.5px;top:535.8px;color:#111">Finish</div>
<div class="btn" style="left:1076px;top:531px;width:70px;height:21px"></div>
<div class="t" style="left:1093.5px;top:535.8px;color:#111;transform:scaleX(0.97);transform-origin:0 0">Cancel</div>

<!-- ============ message box ============ -->
<div class="a" style="left:906px;top:247px;width:178px;height:132px;background:#fff;border:1px solid #8a8a8a"></div>
<div class="t" style="left:915px;top:256.3px;color:#222;transform:scaleX(0.976);transform-origin:0 0">Certificate Export Wizard</div>
<svg style="left:1063px;top:257px" width="11" height="10" viewBox="0 0 11 10"><path d="M0.5 0 L10.5 10 M10.5 0 L0.5 10" stroke="#222" stroke-width="1.1"/></svg>
<div class="t" style="left:917.5px;top:301.8px;color:#111;transform:scaleX(0.93);transform-origin:0 0">The export was successful.</div>
<div class="a" style="left:907px;top:336px;width:176px;height:42px;background:#f0f0f0"></div>
<div class="a" style="left:994px;top:346px;width:73px;height:21px;background:#e1e1e1;border:2px solid #1a76c8"></div>
<div class="t" style="left:1023.5px;top:352px;color:#111;transform:scaleX(0.94);transform-origin:0 0">OK</div>

<!-- ============ zoom toolbar ============ -->
<div class="a" style="left:638px;top:0;width:76px;height:29px;background:#47525e"></div>
<svg style="left:645px;top:2px" width="22" height="22" viewBox="0 0 22 22">
 <circle cx="8" cy="7.8" r="4.9" fill="none" stroke="#fff" stroke-width="1.7"/>
 <path d="M8 5.2 v5.2 M5.4 7.8 h5.2" stroke="#fff" stroke-width="1.9"/>
 <path d="M11.8 11.8 L18 17.5" stroke="#fff" stroke-width="1.8" stroke-linecap="round"/>
</svg>
<div class="a" style="left:676px;top:5px;width:1px;height:15px;background:#fff"></div>
<div class="a" style="left:690px;top:11px;width:3px;height:2px;background:#fff"></div>
<div class="a" style="left:696px;top:11px;width:3px;height:2px;background:#fff"></div>
<div class="a" style="left:702px;top:11px;width:3px;height:2px;background:#fff"></div>
</body></html>
